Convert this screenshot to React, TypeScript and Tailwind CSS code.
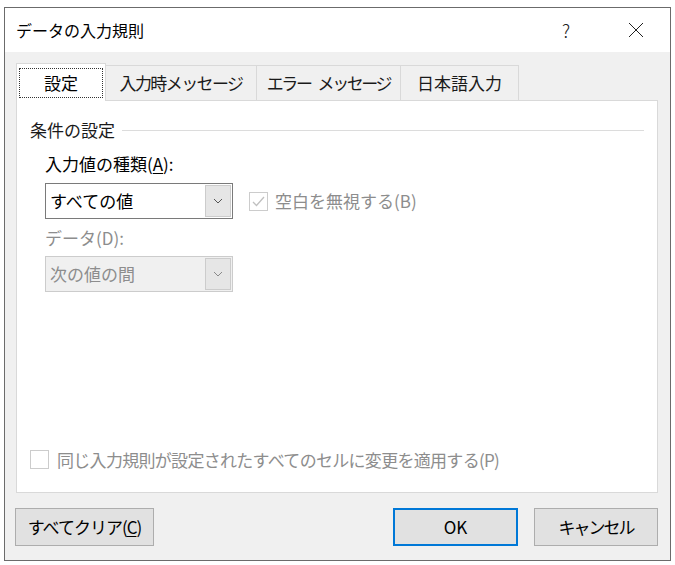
const FONT = { fontFamily: '"Noto Sans CJK JP", "Noto Sans", sans-serif' };

type Tab = { label: React.ReactNode; key: string; width: string; tracking: string; active?: boolean };

const TABS: Tab[] = [
  { key: "settings", label: "設定", width: "w-[90px]", tracking: "tracking-normal", active: true },
  { key: "input", label: "入力時メッセージ", width: "w-[151px]", tracking: "tracking-[-1.6px]" },
  {
    key: "error",
    label: (
      <>
        エラー<span className="ml-[7px]">メッセージ</span>
      </>
    ),
    width: "w-[144px]",
    tracking: "tracking-[-2.4px]",
  },
  { key: "ime", label: "日本語入力", width: "w-[118px]", tracking: "tracking-normal" },
];

function Chevron({ muted }: { muted?: boolean }) {
  return (
    <svg width="10" height="6" viewBox="0 0 10 6" fill="none">
      <polyline
        points="1,1 5,5 9,1"
        stroke={muted ? "#8a8a8a" : "#555"}
        strokeWidth="1"
      />
    </svg>
  );
}

function Select({ value, disabled }: { value: string; disabled?: boolean }) {
  return (
    <div
      className={`flex h-[36px] w-[188px] items-stretch border ${
        disabled ? "border-[#cccccc] bg-[#f0f0f0]" : "border-[#7a7a7a] bg-white"
      }`}
    >
      <div
        className={`flex flex-1 items-center pl-[4px] text-[17px] ${
          disabled ? "text-[#8d8d8d]" : "text-black"
        }`}
      >
        {value}
      </div>
      <div className="my-[1px] mr-[1px] flex w-[26px] items-center justify-center border border-[#cccccc] bg-[#e6e6e6]">
        <Chevron muted={disabled} />
      </div>
    </div>
  );
}

function CheckBox({ checked }: { checked?: boolean }) {
  return (
    <div className="flex h-[19px] w-[19px] items-center justify-center border border-[#cccccc] bg-white">
      {checked && (
        <svg width="13" height="11" viewBox="0 0 13 11" fill="none">
          <polyline points="1,6 4.5,9.5 12,1" stroke="#c0c0c0" strokeWidth="1.3" />
        </svg>
      )}
    </div>
  );
}

function Button({
  label,
  primary,
  width,
  tracking = "tracking-normal",
}: {
  label: React.ReactNode;
  primary?: boolean;
  width: string;
  tracking?: string;
}) {
  return (
    <div
      className={`flex h-[38px] ${width} items-center justify-center bg-[#e1e1e1] text-[17px] text-black ${tracking} ${
        primary ? "border-2 border-[#0078d7]" : "border border-[#adadad]"
      }`}
    >
      {label}
    </div>
  );
}

export default function App() {
  return (
    <div className="h-[565px] w-[675px] bg-white pl-[4px] pt-[7px]" style={FONT}>
      <div className="flex h-[554px] w-[667px] flex-col border border-[#6b6b6b] bg-[#f0f0f0]">
        {/* title bar */}
        <div className="flex h-[44px] items-center bg-white">
          <div className="pl-[11px] text-[16px] text-black">データの入力規則</div>
          <div className="ml-auto mr-[58px] text-[18px] font-light text-[#222]">?</div>
          <svg className="mr-[26px]" width="16" height="16" viewBox="0 0 16 16" fill="none">
            <path d="M1 1 L15 15 M15 1 L1 15" stroke="#222" strokeWidth="1" />
          </svg>
        </div>

        {/* tabs */}
        <div className="ml-[11px] mt-[13px] flex h-[35px] items-end">
          {TABS.map((t) =>
            t.active ? (
              <div
                key={t.key}
                className={`relative z-10 -mb-[1px] flex h-[38px] ${t.width} items-center justify-center border border-b-0 border-[#d9d9d9] bg-white`}
              >
                <div className="flex h-[30px] w-[84px] items-center justify-center border border-dotted border-[#333] text-[17px] text-black">
                  {t.label}
                </div>
              </div>
            ) : (
              <div
                key={t.key}
                className={`flex h-[35px] ${t.width} ${t.tracking} items-center justify-center border border-b-0 border-l-0 border-[#d9d9d9] bg-[#f0f0f0] text-[17px] text-[#1a1a1a]`}
              >
                {t.label}
              </div>
            )
          )}
        </div>

        {/* panel */}
        <div className="ml-[11px] flex h-[393px] w-[642px] flex-col border border-[#d9d9d9] bg-white">
          <div className="mt-[17px] flex items-center pl-[13px] pr-[13px]">
            <span className="text-[17px] leading-[24px] text-[#1a1a1a]">条件の設定</span>
            <div className="ml-[7px] h-px flex-1 bg-[#dcdcdc]" />
          </div>

          <div className="ml-[28px] mt-[10px] text-[17px] leading-[24px] text-black">
            入力値の種類(<span className="underline underline-offset-2">A</span>):
          </div>
          <div className="ml-[28px] mt-[7px] flex items-center">
            <Select value="すべての値" />
            <div className="ml-[16px] flex items-center gap-[7px]">
              <CheckBox checked />
              <span className="text-[17px] text-[#8d8d8d]">空白を無視する(B)</span>
            </div>
          </div>

          <div className="ml-[28px] mt-[7px] text-[17px] leading-[24px] text-[#8d8d8d]">データ(D):</div>
          <div className="ml-[28px] mt-[6px]">
            <Select value="次の値の間" disabled />
          </div>

          <div className="mb-[20px] ml-[13px] mt-auto flex items-center gap-[8px]">
            <CheckBox />
            <span className="text-[17px] tracking-[-0.7px] text-[#8d8d8d]">
              同じ入力規則が設定されたすべてのセルに変更を適用する(P)
            </span>
          </div>
        </div>

        {/* buttons */}
        <div className="ml-[10px] mt-[15px] flex items-center">
          <Button
            width="w-[139px]"
            tracking="tracking-[-1px]"
            label={
              <>
                すべてクリア(<span className="underline underline-offset-2">C</span>)
              </>
            }
          />
          <div className="ml-auto flex gap-[16px] pr-[12px]">
            <Button width="w-[125px]" label="OK" primary />
            <Button width="w-[124px]" label="キャンセル" tracking="tracking-[-2px]" />
          </div>
        </div>
      </div>
    </div>
  );
}
